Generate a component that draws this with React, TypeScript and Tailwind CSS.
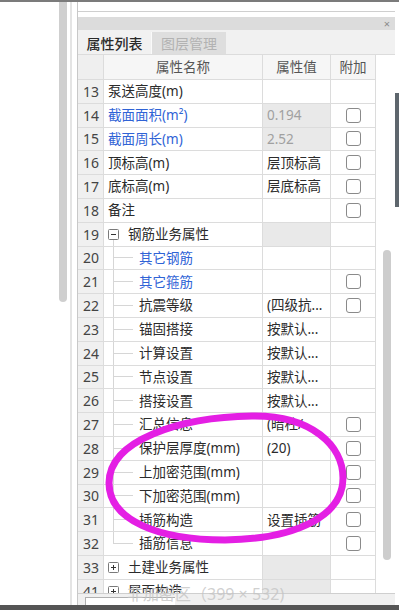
import React from 'react'

type Row = {
  n: number
  name: string
  value?: string
  blue?: boolean
  child?: boolean
  last?: boolean
  box?: 'open' | 'closed'
  check?: boolean
  gray?: boolean
  dim?: boolean
}

const rows: Row[] = [
  { n: 13, name: '泵送高度(m)' },
  { n: 14, name: '截面面积(m²)', value: '0.194', blue: true, gray: true, dim: true, check: true },
  { n: 15, name: '截面周长(m)', value: '2.52', blue: true, gray: true, dim: true, check: true },
  { n: 16, name: '顶标高(m)', value: '层顶标高', check: true },
  { n: 17, name: '底标高(m)', value: '层底标高', check: true },
  { n: 18, name: '备注', check: true },
  { n: 19, name: '钢筋业务属性', box: 'open', gray: true },
  { n: 20, name: '其它钢筋', child: true, blue: true },
  { n: 21, name: '其它箍筋', child: true, blue: true, check: true },
  { n: 22, name: '抗震等级', child: true, value: '(四级抗...', check: true },
  { n: 23, name: '锚固搭接', child: true, value: '按默认...' },
  { n: 24, name: '计算设置', child: true, value: '按默认...' },
  { n: 25, name: '节点设置', child: true, value: '按默认...' },
  { n: 26, name: '搭接设置', child: true, value: '按默认...' },
  { n: 27, name: '汇总信息', child: true, value: '(暗柱/...', check: true },
  { n: 28, name: '保护层厚度(mm)', child: true, value: '(20)', check: true },
  { n: 29, name: '上加密范围(mm)', child: true, check: true },
  { n: 30, name: '下加密范围(mm)', child: true, check: true },
  { n: 31, name: '插筋构造', child: true, value: '设置插筋', check: true },
  { n: 32, name: '插筋信息', child: true, last: true, check: true },
  { n: 33, name: '土建业务属性', box: 'closed', gray: true },
  { n: 41, name: '屋面构造', box: 'closed', gray: true },
]

const line = 'border-[#d6d6d6]'
const grid = 'border-r border-b border-[#dcdcdc]'

function TreeBox({ open }: { open: boolean }) {
  return (
    <svg width="11" height="11" viewBox="0 0 11 11" className="shrink-0">
      <rect x="0.5" y="0.5" width="10" height="10" rx="1" fill="white" stroke="#7a7a7a" />
      <line x1="3" y1="5.5" x2="8" y2="5.5" stroke="#333" />
      {!open && <line x1="5.5" y1="3" x2="5.5" y2="8" stroke="#333" />}
    </svg>
  )
}

function Check() {
  return <div className="w-[15px] h-[15px] rounded-[3px] border border-[#8a8a8a] bg-white" />
}

function NameCell({ r }: { r: Row }) {
  const color = r.blue ? 'text-[#2f63d6]' : 'text-[#2b2b2b]'
  if (r.child) {
    return (
      <div className={`w-[159px] shrink-0 flex items-stretch ${grid}`}>
        <div className="w-[9px] shrink-0" />
        <div className="w-[20px] shrink-0 flex flex-col">
          <div className={`flex-1 border-l border-b ${line}`} />
          <div className={`flex-1 ${r.last ? '' : `border-l ${line}`}`} />
        </div>
        <span className={`ml-[6px] self-center whitespace-nowrap ${color}`}>{r.name}</span>
      </div>
    )
  }
  if (r.box) {
    return (
      <div className={`w-[159px] shrink-0 flex items-stretch pl-[4px] ${grid}`}>
        <div className="w-[11px] shrink-0 flex flex-col items-center">
          <div className="flex-1" />
          <TreeBox open={r.box === 'open'} />
          <div className={`flex-1 ${r.box === 'open' ? 'w-px bg-[#d6d6d6]' : ''}`} />
        </div>
        <span className={`ml-[9px] self-center whitespace-nowrap ${color}`}>{r.name}</span>
      </div>
    )
  }
  return (
    <div className={`w-[159px] shrink-0 flex items-center pl-[4px] ${grid}`}>
      <span className={`whitespace-nowrap ${color}`}>{r.name}</span>
    </div>
  )
}

export default function App() {
  return (
    <div className="relative w-[399px] h-[610px] overflow-hidden bg-white flex flex-col font-['Noto_Sans','Noto_Sans_CJK_SC',sans-serif] text-[13.5px]">
      <div className="h-[2px] bg-[#7b7b7b]" />

      <div className="flex flex-1 min-h-0">
        <div className="w-[70px] shrink-0 pl-[59px]">
          <div className="w-[8px] h-[300px] rounded-b-full bg-[#cfcfcf]" />
        </div>
        <div className="w-[2px] shrink-0 bg-[#e4e4e4]" />
        <div className="w-[5px] shrink-0" />

        {/* property panel */}
        <div className="w-[318px] shrink-0 flex flex-col border-l border-[#c8c8c8]">
          <div className="h-[10px] border-b border-[#cfcfcf]" />
          <div className="h-[5px]" />
          <div className="h-[13px] bg-[#dcdcdc] flex items-center justify-end pr-[5px]">
            <span className="text-[11px] leading-none text-[#8a8a8a]">×</span>
          </div>
          <div className="h-[25px] bg-[#f1f1f1] flex items-end border-b border-[#dcdcdc]">
            <div className="w-[74px] h-[22px] flex items-center justify-center text-[14px] font-medium text-[#2a2a2a] border-r border-[#fafafa]">
              属性列表
            </div>
            <div className="w-[74px] h-[22px] bg-[#dedede] flex items-center justify-center text-[14px] text-[#b2b2b2]">
              图层管理
            </div>
          </div>

          <div className="flex flex-1 min-h-0">
            <div className="w-[298px] shrink-0 flex flex-col overflow-hidden">
              <div className="h-[25px] shrink-0 flex bg-[#f6f6f6] text-[#555]">
                <div className={`w-[26px] shrink-0 bg-[#efefef] ${grid}`} />
                <div className={`w-[159px] shrink-0 flex items-center justify-center ${grid}`}>属性名称</div>
                <div className={`w-[68px] shrink-0 flex items-center justify-center ${grid}`}>属性值</div>
                <div className={`w-[45px] shrink-0 flex items-center justify-center ${grid}`}>附加</div>
              </div>
              {rows.map((r) => (
                <div key={r.n} className="h-[23.8px] shrink-0 flex">
                  <div className={`w-[26px] shrink-0 bg-[#f0f0f0] flex items-center pl-[5px] text-[14px] text-[#444] ${grid}`}>
                    {r.n}
                  </div>
                  <NameCell r={r} />
                  <div
                    className={`w-[68px] shrink-0 flex items-center pl-[4px] whitespace-nowrap overflow-hidden ${grid} ${
                      r.gray ? 'bg-[#e9e9e9]' : ''
                    } ${r.dim ? 'text-[#a0a0a0]' : 'text-[#2b2b2b]'}`}
                  >
                    {r.value}
                  </div>
                  <div className={`w-[45px] shrink-0 flex items-center justify-center ${grid}`}>
                    {r.check && <Check />}
                  </div>
                </div>
              ))}
            </div>
            <div className="w-[20px] shrink-0 pl-[7px] pt-[195px]">
              <div className="w-[8px] h-[310px] rounded-full bg-[#cdcdcd]" />
            </div>
          </div>

          <div className="h-[12px] shrink-0 bg-[#f0f0f0] border-t border-[#cfcfcf] pl-[7px] pt-[3px]">
            <div className="w-[90px] h-full bg-white border-l border-t border-[#b0b0b0]" />
          </div>
        </div>

        <div className="w-[4px] shrink-0 pt-[91px]">
          <div className="h-[114px] bg-[#5e666d]" />
        </div>
      </div>

      <div className="h-[5px] bg-[#555]" />

      <span className="absolute left-[127px] top-[582px] text-[16px] text-[#c4c4c4]/80 whitespace-nowrap pointer-events-none">
        非加密区（399 × 532)
      </span>

      <svg className="absolute inset-0 pointer-events-none" width="399" height="610" viewBox="0 0 399 610">
        <path
          d="M 109 483 C 109 440, 180 417, 252 416 C 312 415, 343 446, 343 478 C 343 515, 298 539, 225 540 C 158 540, 109 520, 109 483 Z"
          fill="none"
          stroke="#e41fe4"
          strokeWidth="7"
        />
      </svg>
    </div>
  )
}
